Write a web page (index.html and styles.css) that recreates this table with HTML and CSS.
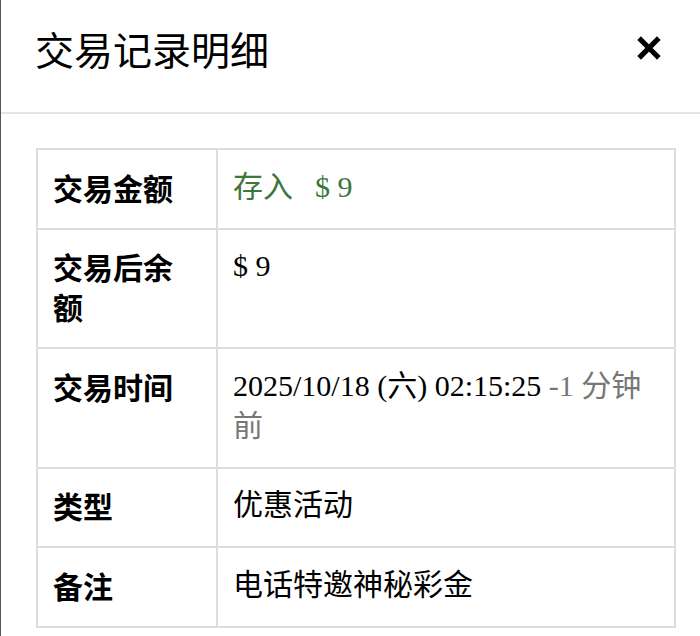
FILE: index.html
```html
<!DOCTYPE html>
<html lang="zh-CN">
<head>
<meta charset="utf-8">
<title>交易记录明细</title>
<link rel="stylesheet" href="styles.css">
</head>
<body>
<div class="modal">
  <div class="modal-header">
    <h4 class="modal-title">交易记录明细</h4>
    <button class="close" type="button" aria-label="关闭">
      <svg width="24" height="24" viewBox="0 0 24 24"><path d="M4 4 L20 20 M20 4 L4 20" stroke="#000" stroke-width="5.2" stroke-linecap="square" fill="none"/></svg>
    </button>
  </div>
  <div class="modal-body">
    <table class="detail">
      <tr><th>交易金额</th><td><span class="success">存入<span class="amt">$ 9</span></span></td></tr>
      <tr><th>交易后余额</th><td>$ 9</td></tr>
      <tr><th>交易时间</th><td>2025/10/18 (六) 02:15:25 <span class="muted">-1 分钟前</span></td></tr>
      <tr><th>类型</th><td>优惠活动</td></tr>
      <tr><th>备注</th><td>电话特邀神秘彩金</td></tr>
    </table>
  </div>
</div>
</body>
</html>
```

FILE: styles.css
```css
html, body {
  margin: 0;
  padding: 0;
  background: #fff;
}
body {
  font-family: "Liberation Serif", "Noto Sans CJK SC", serif;
  color: #000;
}
.modal {
  width: 700px;
  min-height: 636px;
  box-sizing: border-box;
  border-left: 1px solid #555;
}
.modal-header {
  display: flex;
  align-items: center;
  justify-content: space-between;
  padding: 22px 39px 38px 34px;
  border-bottom: 2px solid #e5e5e5;
}
.modal-title {
  margin: 0;
  font-family: "Noto Sans CJK SC", sans-serif;
  font-weight: 400;
  font-size: 39px;
  line-height: 52px;
}
.close {
  display: flex;
  padding: 0;
  margin: 0;
  border: 0;
  background: none;
}
.modal-body {
  padding: 34px 0 0 35px;
}
.detail {
  border-collapse: collapse;
  width: 640px;
  font-size: 30px;
  line-height: 40px;
}
.detail th, .detail td {
  border: 2px solid #ddd;
  padding: 16.5px 16px 21px 15px;
  text-align: left;
  vertical-align: top;
}
.detail th {
  width: 147px;
  font-family: "Noto Sans CJK SC", sans-serif;
  font-weight: 700;
}
.success {
  color: #3c763d;
}
.amt {
  margin-left: 22px;
}
.muted {
  color: #777;
}
```
